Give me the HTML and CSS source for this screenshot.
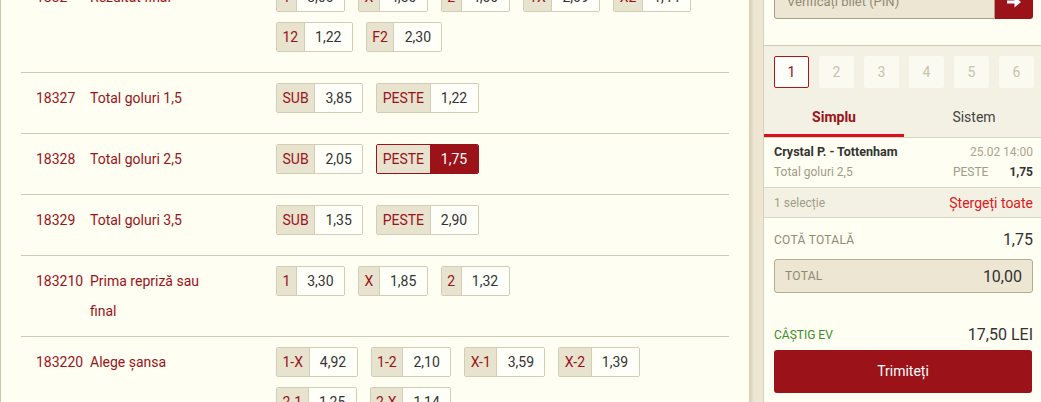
FILE: index.html
```html
<!doctype html>
<html>
  <head>
    <meta charset="utf-8" />
    <title>Pariuri</title>
    <link rel="stylesheet" href="styles.css">
  </head>
  <body>
    <div class="page">
      <main class="markets">
        <div class="market-list">
          <div class="market">
            <span class="code">1832</span>
            <span class="name">Rezultat final</span>
            <div class="odds">
              <span class="odd"><span class="pick">1</span><span class="price">3,60</span></span>
              <span class="odd"><span class="pick">X</span><span class="price">4,50</span></span>
              <span class="odd"><span class="pick">2</span><span class="price">4,00</span></span>
              <span class="odd"><span class="pick">1X</span><span class="price">2,09</span></span>
              <span class="odd"><span class="pick">X2</span><span class="price">1,44</span></span>
              <span class="odd"><span class="pick">12</span><span class="price">1,22</span></span>
              <span class="odd"><span class="pick">F2</span><span class="price">2,30</span></span>
            </div>
          </div>
          <div class="market">
            <span class="code">18327</span>
            <span class="name">Total goluri 1,5</span>
            <div class="odds">
              <span class="odd"><span class="pick">SUB</span><span class="price">3,85</span></span>
              <span class="odd"><span class="pick">PESTE</span><span class="price">1,22</span></span>
            </div>
          </div>
          <div class="market">
            <span class="code">18328</span>
            <span class="name">Total goluri 2,5</span>
            <div class="odds">
              <span class="odd"><span class="pick">SUB</span><span class="price">2,05</span></span>
              <span class="odd selected"><span class="pick">PESTE</span><span class="price">1,75</span></span>
            </div>
          </div>
          <div class="market">
            <span class="code">18329</span>
            <span class="name">Total goluri 3,5</span>
            <div class="odds">
              <span class="odd"><span class="pick">SUB</span><span class="price">1,35</span></span>
              <span class="odd"><span class="pick">PESTE</span><span class="price">2,90</span></span>
            </div>
          </div>
          <div class="market">
            <span class="code">183210</span>
            <span class="name">Prima repriză sau final</span>
            <div class="odds">
              <span class="odd"><span class="pick">1</span><span class="price">3,30</span></span>
              <span class="odd"><span class="pick">X</span><span class="price">1,85</span></span>
              <span class="odd"><span class="pick">2</span><span class="price">1,32</span></span>
            </div>
          </div>
          <div class="market">
            <span class="code">183220</span>
            <span class="name">Alege șansa</span>
            <div class="odds">
              <span class="odd"><span class="pick">1-X</span><span class="price">4,92</span></span>
              <span class="odd"><span class="pick">1-2</span><span class="price">2,10</span></span>
              <span class="odd"><span class="pick">X-1</span><span class="price">3,59</span></span>
              <span class="odd"><span class="pick">X-2</span><span class="price">1,39</span></span>
              <span class="odd"><span class="pick">2-1</span><span class="price">1,25</span></span>
              <span class="odd"><span class="pick">2-X</span><span class="price">1,14</span></span>
            </div>
          </div>
        </div>
      </main>
      <div class="divider"></div>
      <aside class="slip">
        <div class="pin">
          <span class="pin-input">Verificați bilet (PIN)</span>
          <span class="pin-go">
            <svg width="16" height="14" viewBox="0 0 16 14"><path d="M1 5.5h7.5V1.5L15 7l-6.5 5.5V8.5H1z" fill="#fff"/></svg>
          </span>
        </div>
        <div class="slip-head">
          <div class="tickets">
            <span class="ticket active">1</span>
            <span class="ticket">2</span>
            <span class="ticket">3</span>
            <span class="ticket">4</span>
            <span class="ticket">5</span>
            <span class="ticket">6</span>
          </div>
          <div class="tabs">
            <span class="tab active">Simplu</span>
            <span class="tab">Sistem</span>
          </div>
        </div>
        <div class="bet">
          <div class="bet-line">
            <span class="teams">Crystal P. - Tottenham</span>
            <span class="date">25.02 14:00</span>
          </div>
          <div class="bet-line">
            <span class="market-name">Total goluri 2,5</span>
            <span class="bet-pick">PESTE</span>
            <span class="bet-odd">1,75</span>
          </div>
        </div>
        <div class="selection-bar">
          <span>1 selecție</span>
          <span class="clear">Ștergeți toate</span>
        </div>
        <div class="totals">
          <div class="total-row">
            <span class="total-label">COTĂ TOTALĂ</span>
            <span class="total-value">1,75</span>
          </div>
          <div class="stake">
            <span class="total-label">TOTAL</span>
            <span class="stake-value">10,00</span>
          </div>
          <div class="total-row win">
            <span class="win-label">CÂȘTIG EV</span>
            <span class="total-value">17,50 LEI</span>
          </div>
          <div class="submit">Trimiteți</div>
        </div>
      </aside>
    </div>
  </body>
</html>
```

FILE: styles.css
```css
* { margin: 0; padding: 0; box-sizing: border-box; }
body {
  background: #fefef2;
  color: #333;
  font-family: Roboto, "Liberation Sans", sans-serif;
  font-size: 14px;
  height: 402px;
  overflow: hidden;
}
.page { display: flex; height: 402px; }

/* markets */
.markets {
  width: 749px;
  border-left: 1px solid #cbc5a9;
  padding: 0 20px;
  overflow: hidden;
}
.market-list { margin-top: -28px; }
.market {
  display: grid;
  grid-template-columns: 54px 130px 1fr;
  align-items: start;
  padding: 10px 0 10px 15px;
  border-bottom: 1px solid #cfcab3;
}
.code, .name { color: #9b1219; line-height: 30px; }
.odds {
  display: flex;
  flex-wrap: wrap;
  column-gap: 13px;
  padding-left: 56px;
}
.odd {
  display: flex;
  height: 30px;
  line-height: 28px;
  margin-bottom: 10px;
  border: 1px solid #d3cdb4;
  border-radius: 2px;
  overflow: hidden;
}
.pick {
  padding: 0 5.5px;
  background: #e8e3cf;
  color: #9b1219;
  border-right: 1px solid #d3cdb4;
}
.price {
  width: 47px;
  text-align: center;
  background: #fffffa;
  color: #333;
}
.odd.selected { border-color: #9b1219; }
.odd.selected .pick { border-right-color: #9b1219; }
.odd.selected .price { background: #9b1219; color: #fff; }

.divider {
  width: 15px;
  background: linear-gradient(to right, #d6ceb4 0, #e2dbc4 3px, #ece6d2 5px, #ece6d2 14px, #d6d0b9 14px);
}

/* bet slip */
.slip { flex: 1; overflow: hidden; }
.pin {
  display: flex;
  margin-top: -15px;
  padding: 0 8px 26px 10px;
  border-bottom: 1px solid #cfcab3;
}
.pin-input {
  flex: 1;
  height: 34px;
  line-height: 32px;
  padding-left: 12px;
  font-size: 13px;
  color: #8f8a74;
  background: #ece6d2;
  border: 1px solid #a59f88;
  border-radius: 3px 0 0 3px;
}
.pin-go {
  width: 38px;
  height: 34px;
  display: flex;
  align-items: center;
  justify-content: center;
  background: #9b1219;
  border-radius: 0 3px 3px 0;
}
.slip-head {
  background: #f3f1e3;
  border-bottom: 1px solid #dbd6c2;
}
.tickets {
  display: flex;
  gap: 10px;
  padding: 10px 0 0 10px;
}
.ticket {
  width: 35px;
  height: 32px;
  line-height: 30px;
  text-align: center;
  color: #c7c2ab;
  background: #fbfaf1;
  border: 1px solid #fbfaf1;
  border-radius: 2px;
}
.ticket.active { color: #9b1219; background: #fffffa; border-color: #a8161d; }
.tabs { display: flex; padding-top: 12px; }
.tab {
  width: 140px;
  flex-shrink: 0;
  text-align: center;
  line-height: 34px;
  border-bottom: 3px solid transparent;
  color: #444;
}
.tab.active { color: #9b1219; font-weight: bold; border-bottom-color: #d8111c; }

.bet {
  padding: 4px 8px 5px 10px;
  border-bottom: 1px solid #dbd6c2;
  font-size: 12px;
}
.bet-line { display: flex; line-height: 20px; }
.teams { flex: 1; font-weight: bold; font-size: 12.5px; color: #333; }
.date { color: #a9a48f; }
.market-name { flex: 1; color: #a19c87; }
.bet-pick { color: #a19c87; margin-right: 21px; }
.bet-odd { font-weight: bold; color: #333; }

.selection-bar {
  display: flex;
  justify-content: space-between;
  align-items: center;
  height: 30px;
  padding: 0 8px 0 10px;
  background: #f3f1e3;
  border-bottom: 1px solid #dbd6c2;
  font-size: 12px;
  color: #a19c87;
}
.clear { font-size: 14px; color: #dc1820; }

.totals { padding: 12px 8px 0 10px; }
.total-row {
  display: flex;
  justify-content: space-between;
  align-items: center;
  line-height: 20px;
}
.total-label { font-size: 12px; color: #8f8a76; letter-spacing: 0.3px; }
.total-value { font-size: 16px; color: #333; }
.stake {
  display: flex;
  justify-content: space-between;
  align-items: center;
  height: 34px;
  margin-top: 9px;
  padding: 0 10px;
  background: #ece6d2;
  border: 1px solid #b3ac94;
  border-radius: 3px;
}
.stake-value { font-size: 16px; color: #333; }
.win { margin-top: 32px; }
.win-label { font-size: 12px; color: #3f8c2b; }
.submit {
  margin-top: 5px;
  margin-right: 1px;
  height: 43px;
  line-height: 43px;
  text-align: center;
  color: #fff;
  background: #9b1219;
  border-radius: 3px;
}
```
